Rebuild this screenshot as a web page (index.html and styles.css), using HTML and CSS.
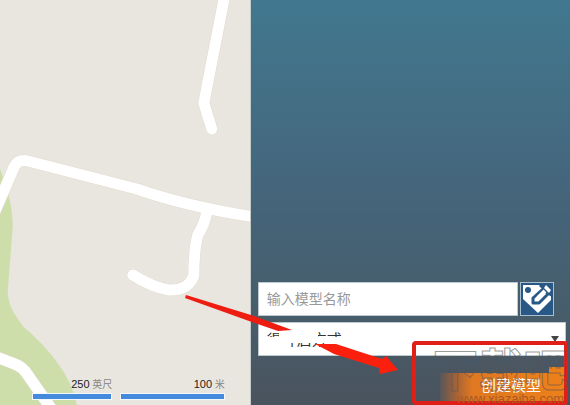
FILE: index.html
```html
<!DOCTYPE html>
<html lang="zh-CN">
<head>
  <meta charset="UTF-8">
  <meta name="viewport" content="width=device-width, initial-scale=1.0">
  <title>创建模型</title>
  <link rel="stylesheet" href="styles.css">
</head>
<body>
  <div class="page">
    <div class="map">
      <svg class="map-canvas" viewBox="0 0 251 405" preserveAspectRatio="xMaxYMax slice" aria-hidden="true">
        <!-- park -->
        <path fill="#cddeab" d="M0 165L5 180Q14 205 14 226L9 290Q9 302 14 311Q18 318 25 327Q47 346 58 362Q74 383 78 405H0Z"/>
        <!-- roads -->
        <g fill="none" stroke-linecap="round" stroke-linejoin="round">
          <g stroke="#e2dccf" stroke-width="12">
            <path d="M226 -5L205 103L213 129"/>
            <path d="M-5 214L14 170Q18 158 29 161L138 189Q190 207 256 217"/>
            <path d="M208 212Q206 224 199 235Q195 250 195 276Q189 291 170 290Q153 287 134 275"/>
            <path d="M-5 356L16 364Q24 367 29 375L52 408"/>
          </g>
          <g stroke="#fff" stroke-width="11">
            <path d="M226 -5L205 103L213 129"/>
            <path d="M-5 214L14 170Q18 158 29 161L138 189Q190 207 256 217"/>
            <path d="M208 212Q206 224 199 235Q195 250 195 276Q189 291 170 290Q153 287 134 275"/>
            <path d="M-5 356L16 364Q24 367 29 375L52 408"/>
          </g>
        </g>
      </svg>
      <div class="scale">
        <div class="scale-item scale-feet"><b>250</b> 英尺</div>
        <div class="scale-item scale-metres"><b>100</b> 米</div>
      </div>
    </div>

    <form class="panel">
      <div class="name-row">
        <input class="field name-input" type="text" placeholder="输入模型名称" aria-label="输入模型名称">
        <button class="tag-button" type="button" aria-label="标签">
          <svg viewBox="0 0 32 32" aria-hidden="true">
            <path fill="#fff" d="M2 2H20L30 12V17L17 30L2 16Z"/>
            <circle cx="7" cy="7" r="3" fill="#285886"/>
            <path fill="#285886" d="M20 0H32V14L29 13L18 3Z"/>
            <path fill="#fff" stroke="#285886" stroke-width="3" stroke-linejoin="round" d="M22 6L12 15V20H18L27 11Z"/>
            <path fill="none" stroke="#fff" stroke-width="4" d="M17 15L24 8"/>
            <path fill="#fff" d="M25 2L30 7L28 10L23 5Z"/>
          </svg>
        </button>
      </div>
      <div class="select-wrap">
        <select class="field mode-select" aria-label="方式">
          <option>得开启方式</option>
        </select>
        <span class="caret" aria-hidden="true"></span>
      </div>
      <button class="create-button" type="submit">创建模型</button>
    </form>

    <svg class="guide" viewBox="0 0 570 405" width="570" height="405" aria-hidden="true">
      <path fill="#fff" d="M279 328H318V337H346V349H325V343H288V349H262V337H279Z"/>
      <path fill="#ee1d12" d="M186 295L251 315L292 330L278 331L249 321L185 298Z"/>
      <path fill="#fb200d" d="M315 344H336L382 359L386 356L398 370L380 374L379 368L334 354Z"/>
      <rect x="414" y="343" width="152" height="60" rx="2" fill="none" stroke="#df2019" stroke-width="4"/>
    </svg>

    <div class="watermark" aria-hidden="true">
      <div class="watermark-name">下载吧</div>
      <div class="watermark-url">www.xiazaiba.com</div>
    </div>
  </div>
</body>
</html>
```
FILE: styles.css
```css
* {
  box-sizing: border-box;
}
body {
  margin: 0;
  font-family: "Liberation Sans", "Noto Sans CJK SC", sans-serif;
}
.page {
  position: relative;
  display: flex;
  min-height: 100vh;
  overflow: hidden;
}
.map {
  position: relative;
  flex: 0 0 44%;
  display: flex;
  align-items: flex-end;
  background-color: #e9e6df;
  border-right: 1px solid #c4cbc8;
}
.map-canvas {
  position: absolute;
  inset: 0;
  width: 100%;
  height: 100%;
}
.scale {
  position: relative;
  flex: 1;
  display: grid;
  grid-template-columns: 10fr 13fr;
  gap: 8px;
  padding: 0 25px 5px 32px;
}
.scale-item {
  font-size: 10px;
  line-height: 16px;
  text-align: right;
  color: #888;
}
.scale-item b {
  font-weight: normal;
  font-size: 11px;
  color: #222;
}
.scale-item::after {
  content: "";
  display: block;
  height: 5px;
  background-color: #448bdd;
  border: 1px solid #f4f8fb;
}
.panel {
  flex: 1;
  min-width: 0;
  display: flex;
  flex-direction: column;
  justify-content: flex-end;
  padding: 0 4px 0 7px;
  background: linear-gradient(#41788f, #45647a 50%, #475e6c 75%, #4a535e);
}
.name-row {
  display: flex;
  gap: 2px;
  margin: 0 12px 6px 0;
}
.field {
  width: 100%;
  height: 34px;
  padding: 0 8px;
  border: 1px solid #bdc8cf;
  border-radius: 0;
  background-color: #fff;
  color: #333;
  font-family: inherit;
  font-size: 14px;
}
.name-input {
  flex: 1;
  min-width: 0;
}
.name-input::placeholder {
  color: #999;
}
.tag-button {
  width: 34px;
  height: 34px;
  padding: 0;
  border: 1px solid #a9bfce;
  background-color: #285886;
}
.tag-button svg {
  display: block;
  width: 32px;
  height: 32px;
}
.select-wrap {
  position: relative;
}
.mode-select {
  display: block;
  appearance: none;
  font-size: 15px;
}
.caret {
  position: absolute;
  right: 7px;
  bottom: 14px;
  border: 4px solid transparent;
  border-top: 6px solid #444;
  border-bottom: 0;
}
.create-button {
  align-self: flex-end;
  width: 126px;
  height: 38px;
  margin-top: 11px;
  padding: 0 8px 0 24px;
  border: 0;
  background: linear-gradient(90deg, #56565a, #a46237 16px, #df7821 32px, #ed8019);
  clip-path: polygon(0 6px, calc(100% - 17px) 6px, calc(100% - 17px) 0, 100% 0, 100% 100%, 0 100%);
  color: #fff;
  font-family: inherit;
  font-size: 15px;
  line-height: 34px;
}
.watermark {
  position: absolute;
  right: 2px;
  bottom: 0;
  pointer-events: none;
}
.watermark-name {
  font-size: 45px;
  font-weight: bold;
  line-height: 42px;
  color: transparent;
  -webkit-text-stroke: 1px rgba(90, 85, 85, 0.6);
}
.watermark-url {
  padding-right: 4px;
  font-size: 13px;
  line-height: 12px;
  text-align: right;
  color: #a95a23;
}
.guide {
  position: absolute;
  right: 0;
  bottom: 0;
  pointer-events: none;
}
```
